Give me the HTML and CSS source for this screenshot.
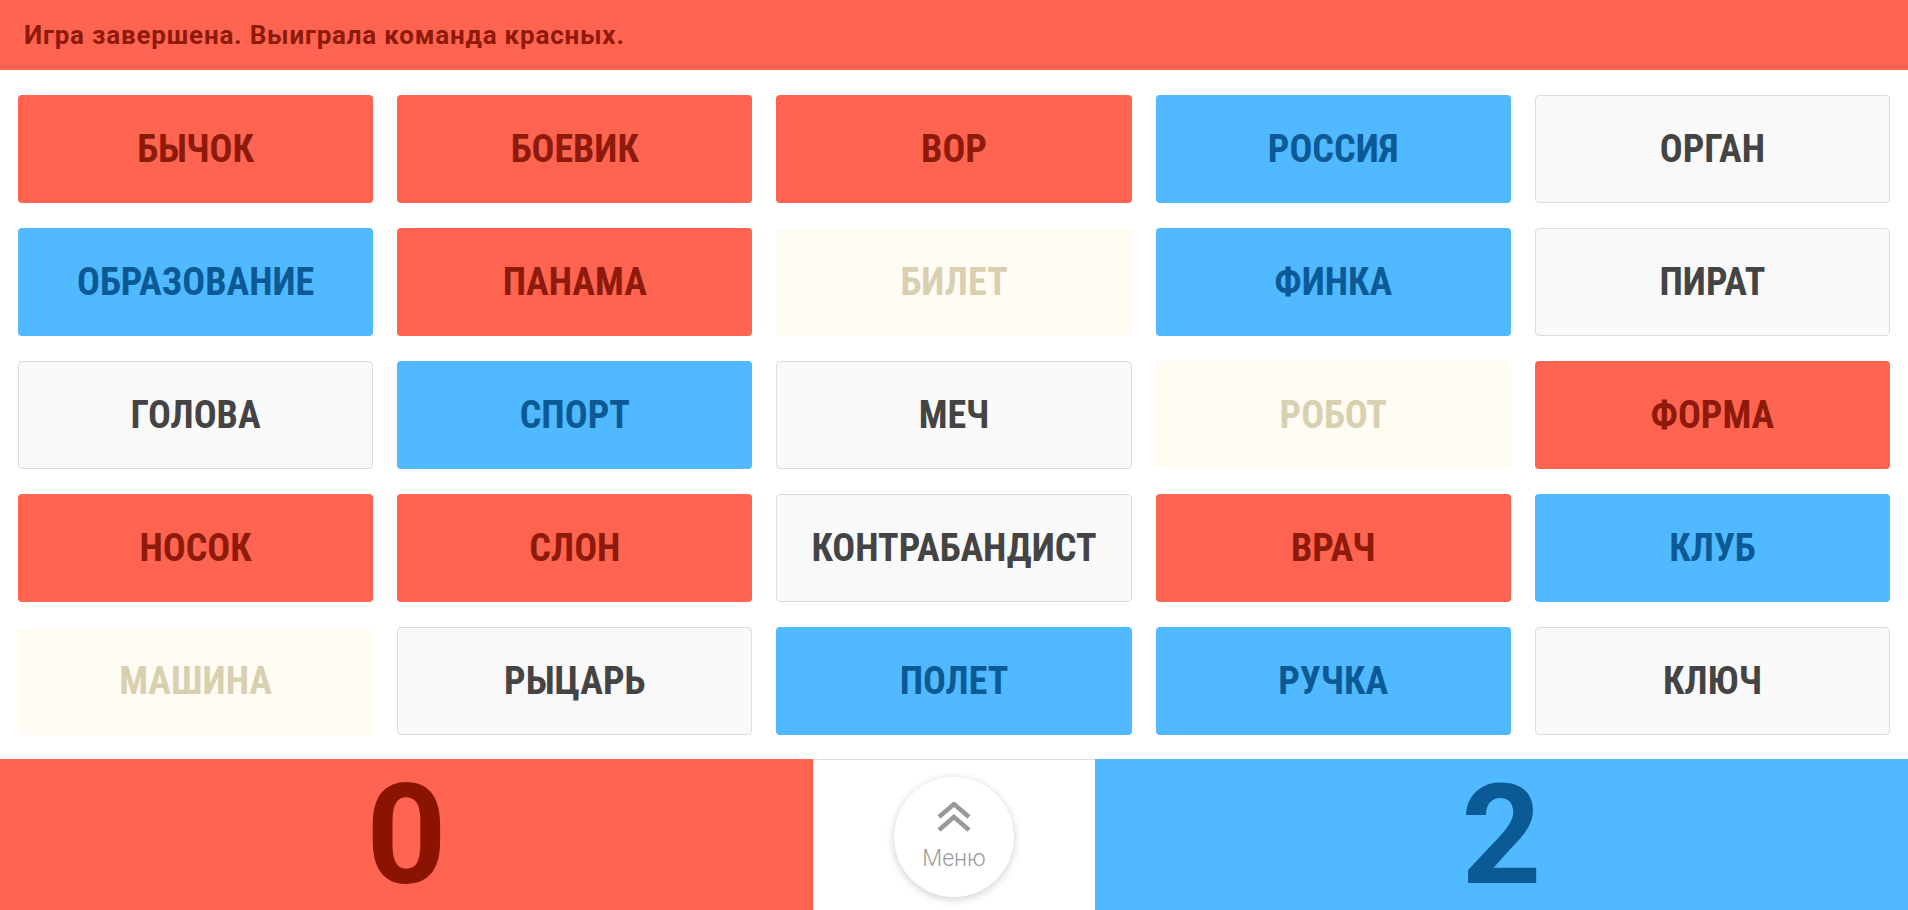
FILE: index.html
```html
<!DOCTYPE html>
<html lang="ru">
<head>
    <meta charset="UTF-8">
    <meta name="viewport" content="width=device-width, initial-scale=1.0">
    <title>Слова</title>
    <link rel="stylesheet" href="styles.css">
</head>
<body>
    <header class="status">
        Игра завершена. Выиграла команда красных.
    </header>

    <main class="board">
        <div class="card red">БЫЧОК</div>
        <div class="card red">БОЕВИК</div>
        <div class="card red">ВОР</div>
        <div class="card blue">РОССИЯ</div>
        <div class="card neutral">ОРГАН</div>

        <div class="card blue">ОБРАЗОВАНИЕ</div>
        <div class="card red">ПАНАМА</div>
        <div class="card killer">БИЛЕТ</div>
        <div class="card blue">ФИНКА</div>
        <div class="card neutral">ПИРАТ</div>

        <div class="card neutral">ГОЛОВА</div>
        <div class="card blue">СПОРТ</div>
        <div class="card neutral">МЕЧ</div>
        <div class="card killer">РОБОТ</div>
        <div class="card red">ФОРМА</div>

        <div class="card red">НОСОК</div>
        <div class="card red">СЛОН</div>
        <div class="card neutral">КОНТРАБАНДИСТ</div>
        <div class="card red">ВРАЧ</div>
        <div class="card blue">КЛУБ</div>

        <div class="card killer">МАШИНА</div>
        <div class="card neutral">РЫЦАРЬ</div>
        <div class="card blue">ПОЛЕТ</div>
        <div class="card blue">РУЧКА</div>
        <div class="card neutral">КЛЮЧ</div>
    </main>

    <footer class="scores">
        <div class="score score-red">0</div>
        <div class="menu-area">
            <button class="menu-btn">
                <svg class="menu-icon" width="34" height="30" viewBox="0 0 34 30">
                    <polyline points="2,15 17,2 32,15" />
                    <polyline points="2,28 17,15 32,28" />
                </svg>
                <span>Меню</span>
            </button>
        </div>
        <div class="score score-blue">2</div>
    </footer>
</body>
</html>
```

FILE: styles.css
```css
body {
    margin: 0;
    padding: 0;
    font-family: 'Roboto', 'Liberation Sans', sans-serif;
    background: #fff;
}

.status {
    height: 70px;
    display: flex;
    align-items: center;
    padding-left: 24px;
    background-color: #ff6450;
    color: #8e1a0b;
    font-size: 26px;
    font-weight: 700;
    letter-spacing: 0.8px;
}

.board {
    display: grid;
    grid-template-columns: repeat(5, 1fr);
    grid-auto-rows: 108px;
    gap: 25px 24px;
    padding: 25px 18px 24px;
}

.card {
    display: flex;
    align-items: center;
    justify-content: center;
    box-sizing: border-box;
    border: 1px solid transparent;
    border-radius: 4px;
    font-size: 38px;
    font-weight: 700;
    font-stretch: 75%;
}

.red {
    background-color: #ff6450;
    color: #8e1a0b;
}

.blue {
    background-color: #50b9ff;
    color: #0b5a96;
}

.neutral {
    background-color: #f9f9f9;
    border-color: #dcdcdc;
    color: #444;
}

.killer {
    background-color: #fffcf4;
    color: #d8d0b0;
}

.scores {
    display: flex;
    height: 151px;
}

.score {
    flex: 1;
    display: flex;
    align-items: center;
    justify-content: center;
    font-size: 140px;
    font-weight: 700;
    line-height: 1;
}

.score-red {
    background-color: #ff6450;
    color: #8b1400;
}

.score-blue {
    background-color: #50b9ff;
    color: #0a5a96;
}

.menu-area {
    width: 282px;
    box-sizing: border-box;
    border-top: 1px solid #dcdcdc;
    display: flex;
    justify-content: center;
    padding-top: 17px;
}

.menu-btn {
    width: 120px;
    height: 120px;
    border: none;
    border-radius: 50%;
    background: #fff;
    box-shadow: 0 2px 8px rgba(0,0,0,0.2);
    display: flex;
    flex-direction: column;
    align-items: center;
    padding: 25px 0 0;
    font-family: 'Roboto', sans-serif;
    font-size: 23px;
    font-weight: 300;
    color: #999;
    cursor: pointer;
}

.menu-icon {
    display: block;
    fill: none;
    stroke: #999;
    stroke-width: 4.5;
    margin-bottom: 13px;
}
```
